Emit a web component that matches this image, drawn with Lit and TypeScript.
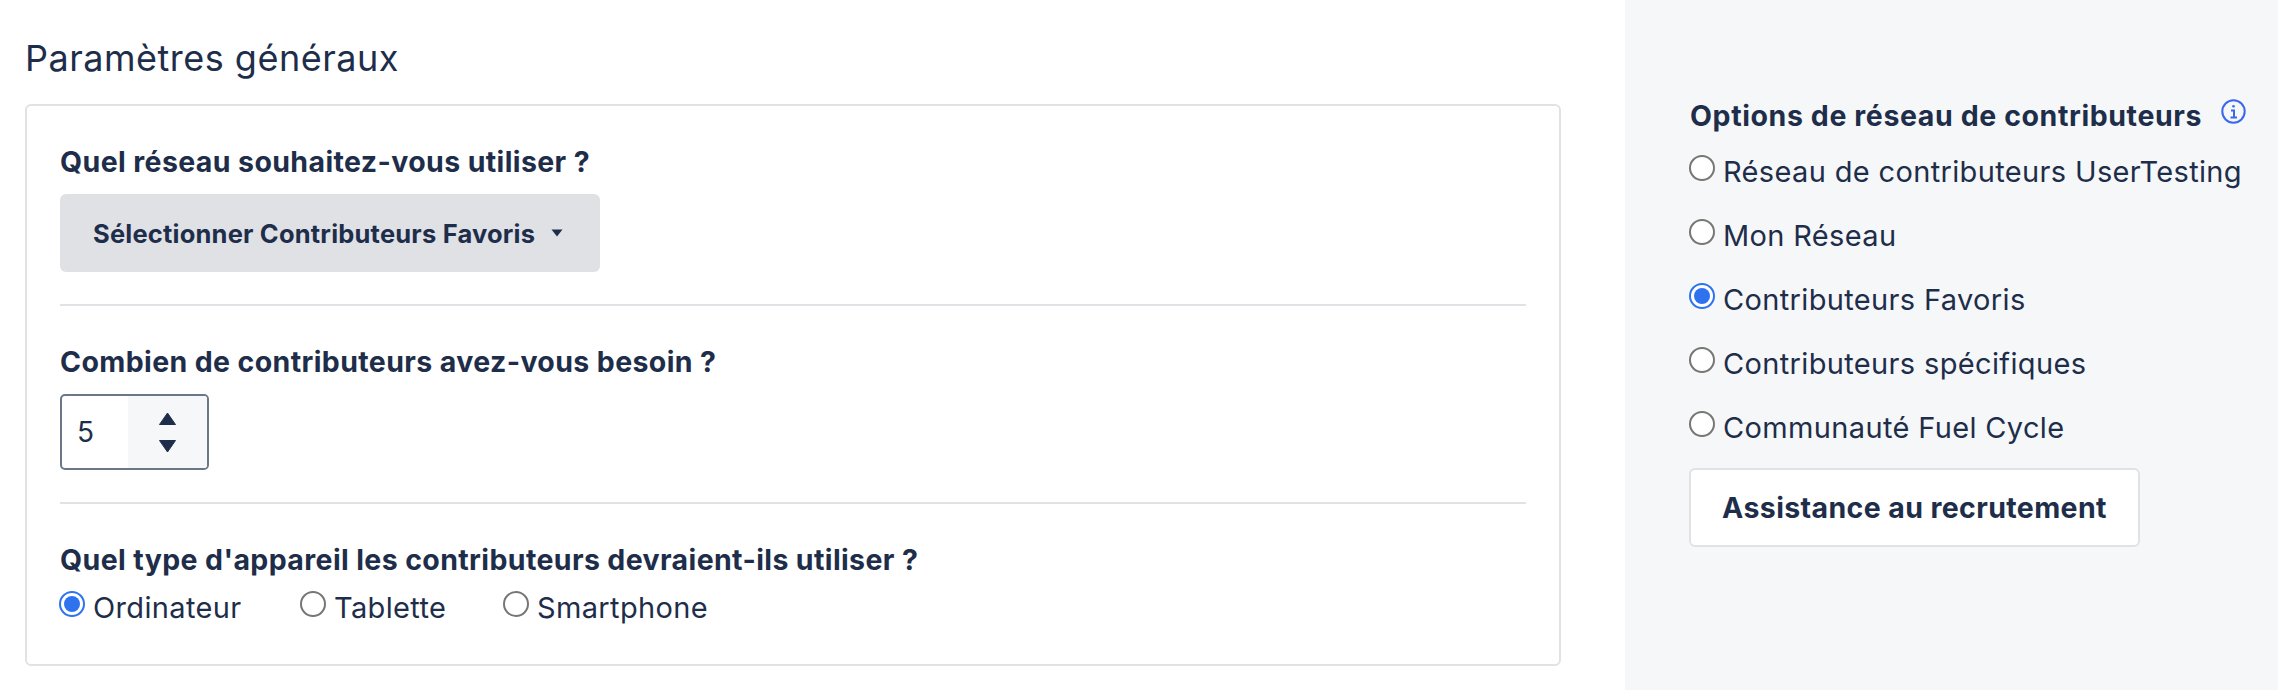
import { LitElement, html, css } from "lit";
import { customElement } from "lit/decorators.js";

const NET = [
  ["Réseau de contributeurs UserTesting", false],
  ["Mon Réseau", false],
  ["Contributeurs Favoris", true],
  ["Contributeurs spécifiques", false],
  ["Communauté Fuel Cycle", false],
] as const;
const DEV = [
  ["Ordinateur", true],
  ["Tablette", false],
  ["Smartphone", false],
] as const;

@customElement("app-root")
export class AppRoot extends LitElement {
  static styles = css`
    :host {
      display: flex;
      width: 2278px;
      height: 690px;
      font-family: "Inter", "Liberation Sans", sans-serif;
      color: #1e2e4a;
      background: #fff;
      overflow: hidden;
    }
    .main { width: 1625px; padding: 36px 64px 0 25px; box-sizing: border-box; flex: none; }
    h1 { margin: 0 0 24px; font-size: 36px; font-weight: 400; line-height: 44px; letter-spacing: 0.5px; }
    .card { border: 2px solid #e0e2e6; border-radius: 6px; padding: 38px 33px 38px; }
    .label { margin: 0; font-size: 28.5px; font-weight: 700; line-height: 36px; letter-spacing: 0.38px; }
    .dd {
      display: flex; align-items: center; gap: 16px;
      width: 540px; height: 78px; margin-top: 14px; padding-left: 33px; box-sizing: border-box;
      background: #dfe1e5; border-radius: 6px;
      font-size: 25.5px; font-weight: 700; letter-spacing: 0.2px;
    }
    .dd svg { width: 12px; height: 8px; }
    hr { border: 0; height: 2px; background: #e0e2e6; margin: 32px 0 38px; }
    hr.b { margin: 32px 0 38px; }
    .num {
      display: flex; width: 149px; height: 76px; margin-top: 14px; box-sizing: border-box;
      border: 2px solid #6b7688; border-radius: 5px; overflow: hidden;
    }
    .val { width: 66px; padding-left: 15px; box-sizing: border-box; font-size: 28px; line-height: 72px; }
    .spin { flex: 1; background: #f6f7f9; display: flex; flex-direction: column; align-items: center; justify-content: center; gap: 15px; }
    .spin svg { width: 17px; height: 13px; display: block; }
    .devs { display: flex; margin-top: 12px; }
    .devs .radio:nth-child(1) { width: 241px; }
    .devs .radio:nth-child(2) { width: 203px; }
    .radio { display: flex; gap: 8px; font-size: 29px; line-height: 36px; height: 36px; white-space: nowrap; letter-spacing: 0.35px; }
    .dot {
      width: 26px; height: 26px; box-sizing: border-box; flex: none; border-radius: 50%;
      border: 2px solid #767676; background: #fff;
      margin: 1px 0 0 -1px;
    }
    .dot.on { border-color: #2f72f0; padding: 3px; }
    .dot.on::after { content: ""; display: block; width: 16px; height: 16px; border-radius: 50%; background: #2f72f0; }
    aside { flex: 1; background: #f6f7f9; padding: 98px 0 0 65px; box-sizing: border-box; }
    .head { display: flex; align-items: flex-start; gap: 19px; margin-bottom: 20px; white-space: nowrap; letter-spacing: 0.6px; }
    .head svg { width: 25px; height: 25px; flex: none; margin-top: 1px; }
    .list { display: flex; flex-direction: column; gap: 28px; }
    .btn {
      display: flex; align-items: center; justify-content: center;
      width: 451px; height: 79px; margin: 22px 0 0 -1px; box-sizing: border-box;
      background: #fff; border: 2px solid #e0e2e6; border-radius: 6px;
      font-size: 28.5px; font-weight: 700; letter-spacing: 0.38px;
    }
  `;

  private radio(t: string, on: boolean) {
    return html`<div class="radio"><span class="dot ${on ? "on" : ""}"></span><span>${t}</span></div>`;
  }

  render() {
    return html`
      <div class="main">
        <h1>Paramètres généraux</h1>
        <div class="card">
          <p class="label">Quel réseau souhaitez-vous utiliser ?</p>
          <div class="dd">Sélectionner Contributeurs Favoris
            <svg viewBox="0 0 12 8"><path d="M0.5 0.5h11L6 7.5z" fill="#1e2e4a"/></svg>
          </div>
          <hr />
          <p class="label">Combien de contributeurs avez-vous besoin ?</p>
          <div class="num">
            <div class="val">5</div>
            <div class="spin">
              <svg viewBox="0 0 17 13"><path d="M8.5 1 16.5 12.5H.5z" fill="#1e2e4a" stroke="#1e2e4a" stroke-width="1" stroke-linejoin="round"/></svg>
              <svg viewBox="0 0 17 13"><path d="M8.5 12 16.5.5H.5z" fill="#1e2e4a" stroke="#1e2e4a" stroke-width="1" stroke-linejoin="round"/></svg>
            </div>
          </div>
          <hr class="b" />
          <p class="label">Quel type d'appareil les contributeurs devraient-ils utiliser ?</p>
          <div class="devs">${DEV.map(([t, on]) => this.radio(t, on))}</div>
        </div>
      </div>
      <aside>
        <div class="head label">
          <span>Options de réseau de contributeurs</span>
          <svg viewBox="0 0 25 25" fill="none" stroke="#3b66ee" stroke-width="2">
            <circle cx="12.5" cy="12.5" r="11.2"/>
            <path d="M10 11.5h3v7M9.5 18.5h6.5"/>
            <circle cx="12.5" cy="7.2" r="1.3" fill="#3b66ee" stroke="none"/>
          </svg>
        </div>
        <div class="list">${NET.map(([t, on]) => this.radio(t, on))}</div>
        <div class="btn">Assistance au recrutement</div>
      </aside>
    `;
  }
}
